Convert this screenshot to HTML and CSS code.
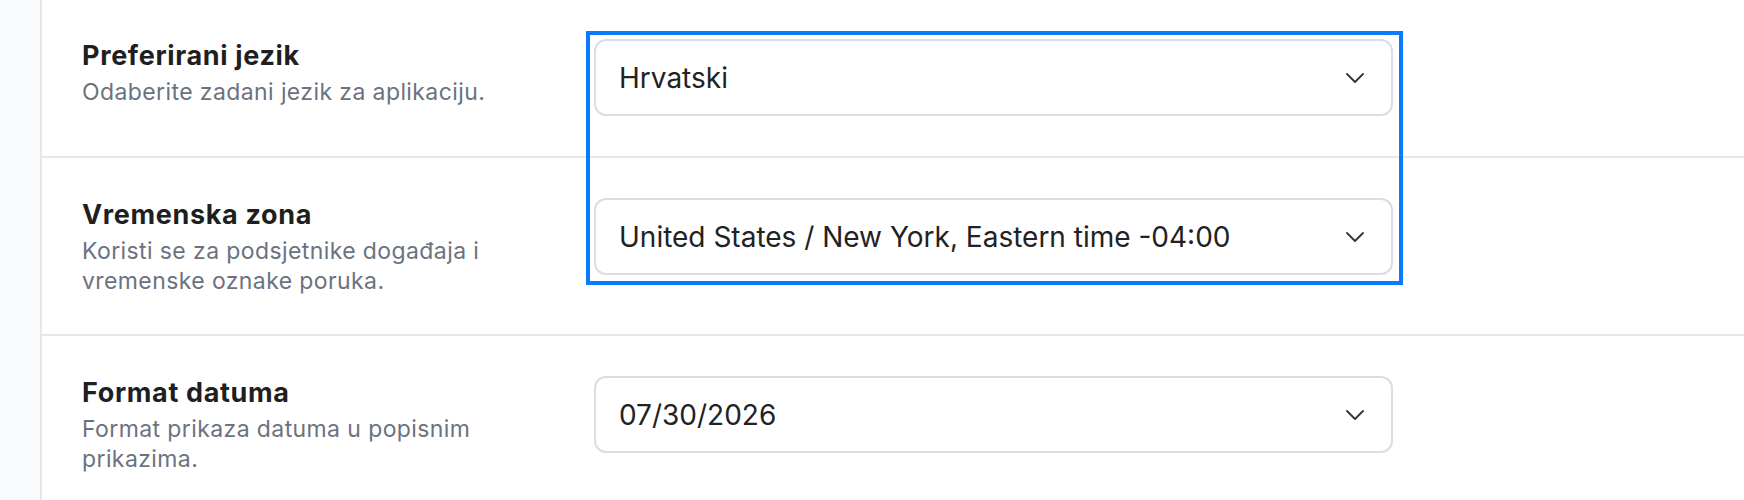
FILE: index.html
```html
<!DOCTYPE html>
<html lang="hr">
<head>
<meta charset="UTF-8" />
<meta name="viewport" content="width=device-width, initial-scale=1" />
<title>Postavke</title>
<link rel="stylesheet" href="styles.css">
</head>
<body>
  <div class="layout">
    <aside class="rail"></aside>

    <main class="settings">
      <section class="setting">
        <div class="setting-text">
          <h3>Preferirani jezik</h3>
          <p>Odaberite zadani jezik za aplikaciju.</p>
        </div>
        <div class="select-wrap">
          <select id="language">
            <option selected>Hrvatski</option>
            <option>English</option>
            <option>Deutsch</option>
          </select>
          <svg class="chevron" width="18" height="10" viewBox="0 0 18 10"><path d="M1 1l8 8 8-8" /></svg>
        </div>
      </section>

      <section class="setting">
        <div class="setting-text">
          <h3>Vremenska zona</h3>
          <p>Koristi se za podsjetnike događaja i vremenske oznake poruka.</p>
        </div>
        <div class="select-wrap">
          <select id="timezone">
            <option selected>United States / New York, Eastern time -04:00</option>
            <option>Europe / Zagreb, Central European time +02:00</option>
          </select>
          <svg class="chevron" width="18" height="10" viewBox="0 0 18 10"><path d="M1 1l8 8 8-8" /></svg>
        </div>
      </section>

      <section class="setting">
        <div class="setting-text">
          <h3>Format datuma</h3>
          <p>Format prikaza datuma u popisnim prikazima.</p>
        </div>
        <div class="select-wrap">
          <select id="dateFormat">
            <option selected>07/30/2026</option>
            <option>30.07.2026.</option>
            <option>2026-07-30</option>
          </select>
          <svg class="chevron" width="18" height="10" viewBox="0 0 18 10"><path d="M1 1l8 8 8-8" /></svg>
        </div>
      </section>

      <!-- highlight around the language + timezone pickers -->
      <div class="focus-frame"></div>
    </main>
  </div>
</body>
</html>
```

FILE: styles.css
```css
body {
  margin: 0;
  font-family: Inter, "Noto Sans", sans-serif;
  background: #fff;
  color: #222;
}

.layout {
  display: flex;
  min-height: 100vh;
}

.rail {
  width: 40px;
  flex-shrink: 0;
  background: #f9fafb;
  border-right: 2px solid #e5e7eb;
}

.settings {
  flex: 1;
  position: relative;
}

/* One settings row: label on the left, control on the right */
.setting {
  display: grid;
  grid-template-columns: 432px 799px;
  column-gap: 80px;
  align-items: start;
  padding: 40px 40px 38px;
  border-bottom: 2px solid #e5e7eb;
}

.setting:first-child {
  padding: 39px 40px 40px;
}

.setting-text h3 {
  margin: 0;
  font-size: 27px;
  line-height: 34px;
  font-weight: 700;
  letter-spacing: 0.65px;
  color: #1f1f1f;
}

.setting-text p {
  margin: 4px 0 0;
  font-size: 23px;
  line-height: 30px;
  letter-spacing: 0.4px;
  color: #6b7280;
}

.select-wrap {
  position: relative;
}

.select-wrap select {
  appearance: none;
  -webkit-appearance: none;
  width: 100%;
  height: 77px;
  box-sizing: border-box;
  padding: 0 70px 0 23px;
  border: 2px solid #dadde2;
  border-radius: 12px;
  background: #fff;
  font-family: Inter, "Noto Sans", sans-serif;
  font-size: 28px;
  color: #222;
  outline: none;
}

.chevron {
  position: absolute;
  right: 29px;
  top: 50%;
  margin-top: -5px;
  pointer-events: none;
  fill: none;
  stroke: #333;
  stroke-width: 1.8;
  stroke-linecap: round;
  stroke-linejoin: round;
}

.focus-frame {
  position: absolute;
  left: 544px;
  top: 31px;
  width: 817px;
  height: 254px;
  box-sizing: border-box;
  border: 4px solid #0a7aff;
  pointer-events: none;
}
```
